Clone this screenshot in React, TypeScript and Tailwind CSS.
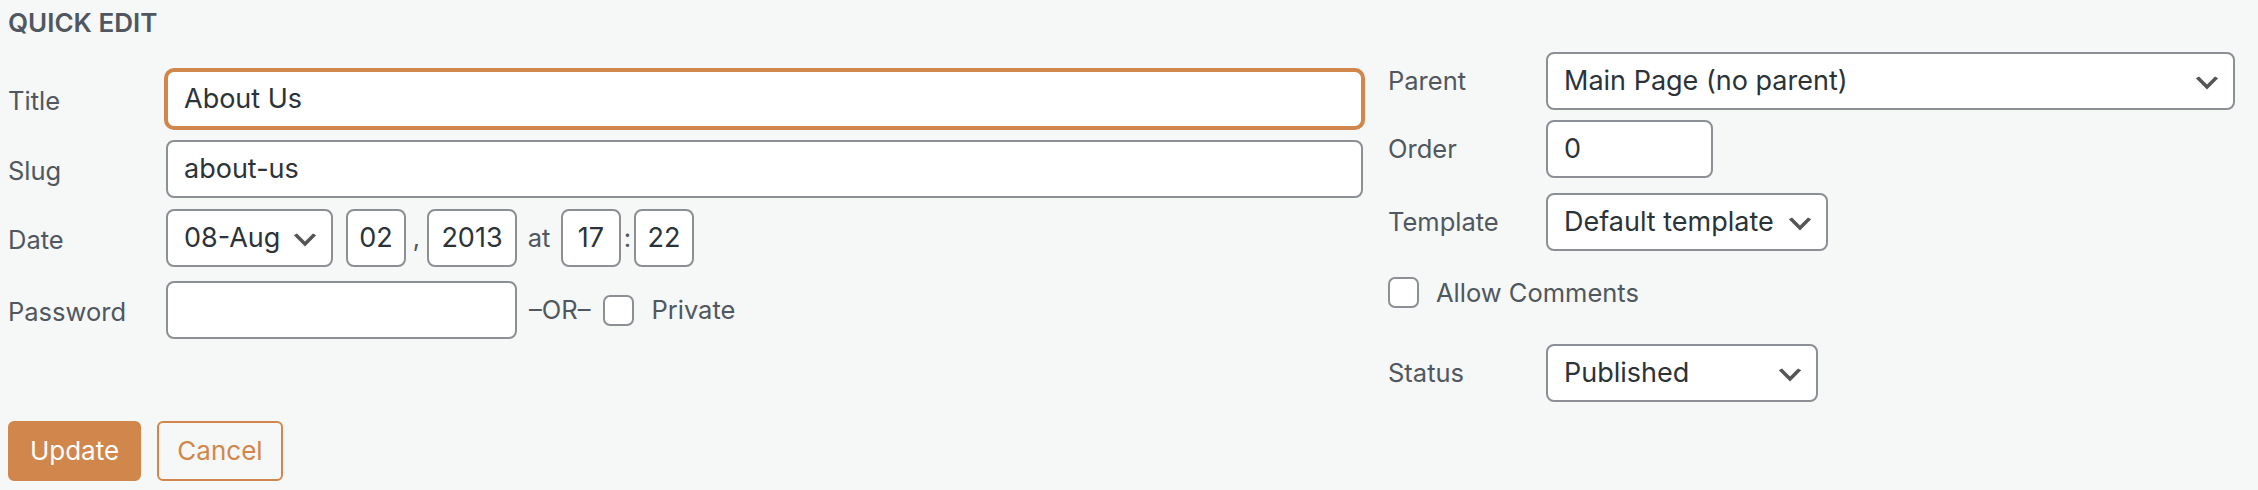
import React from "react";

function Chevron({ top }: { top: string }) {
  return (
    <svg
      width="32"
      height="32"
      viewBox="0 0 20 20"
      className={`absolute right-[10px] ${top}`}
    >
      <path d="M5 6l5 5 5-5 2 1-7 7-7-7 2-1z" fill="#555" />
    </svg>
  );
}

function Select({ value, w }: { value: string; w: string }) {
  return (
    <div
      className={`relative h-[58px] ${w} shrink-0 rounded-[8px] border-2 border-[#8c8f94] bg-white flex items-center pl-[16px] text-[27px] leading-[40px] text-[#2c3338]`}
    >
      <span className="whitespace-nowrap">{value}</span>
      <Chevron top="top-[13px]" />
    </div>
  );
}

function Box({ value, w, center }: { value: string; w: string; center?: boolean }) {
  return (
    <div
      className={`h-[58px] ${w} shrink-0 rounded-[8px] border-2 border-[#8c8f94] bg-white flex items-center ${
        center ? "justify-center" : "pl-[16px]"
      } text-[27px] leading-[40px] text-[#2c3338]`}
    >
      <span className="whitespace-nowrap">{value}</span>
    </div>
  );
}

function Checkbox() {
  return (
    <div className="w-[31px] h-[31px] shrink-0 rounded-[7px] border-2 border-[#8c8f94] bg-white" />
  );
}

function Label({ children, left }: { children: React.ReactNode; left?: boolean }) {
  return (
    <div
      className={`w-[158px] shrink-0 text-[25.5px] leading-[32px] text-[#50575e] ${
        left ? "pt-[3px]" : ""
      }`}
    >
      {children}
    </div>
  );
}

export default function App() {
  return (
    <div className="w-[2258px] h-[490px] bg-[#f6f7f7] font-['Inter',_'Liberation_Sans',_sans-serif] pl-[8px] overflow-hidden">
      <div className="pt-[10px] h-[36px] text-[26px] leading-[26px] font-semibold text-[#50575e]">
        QUICK EDIT
      </div>

      <div className="flex items-start">
        {/* Left column */}
        <div className="w-[1355px] shrink-0 pt-[34px] flex flex-col">
          <div className="flex items-center">
            <Label left>Title</Label>
            <div className="h-[58px] w-[1197px] rounded-[8px] border-2 border-[#d1874b] shadow-[0_0_0_2px_#d1874b] bg-white flex items-center pl-[16px] text-[27px] leading-[40px] text-[#2c3338]">
              About Us
            </div>
          </div>

          <div className="flex items-center mt-[12px]">
            <Label left>Slug</Label>
            <Box value="about-us" w="w-[1197px]" />
          </div>

          <div className="flex items-center mt-[11px]">
            <Label left>Date</Label>
            <Select value="08-Aug" w="w-[167px]" />
            <div className="ml-[13px]">
              <Box value="02" w="w-[60px]" center />
            </div>
            <span className="w-[21px] text-center text-[25.5px] leading-[32px] text-[#50575e]">,</span>
            <Box value="2013" w="w-[90px]" center />
            <span className="w-[44px] text-center text-[25.5px] leading-[32px] text-[#50575e]">at</span>
            <Box value="17" w="w-[60px]" center />
            <span className="w-[13px] text-center text-[25.5px] leading-[32px] text-[#50575e]">:</span>
            <Box value="22" w="w-[60px]" center />
          </div>

          <div className="flex items-center mt-[14px]">
            <Label left>Password</Label>
            <Box value="" w="w-[351px]" />
            <span className="ml-[12px] text-[25.5px] leading-[32px] text-[#50575e]">–OR–</span>
            <div className="ml-[13px]">
              <Checkbox />
            </div>
            <span className="ml-[17px] text-[25.5px] leading-[32px] text-[#50575e]">Private</span>
          </div>
        </div>

        {/* Right column */}
        <div className="ml-[25px] w-[847px] shrink-0 pt-[16px] flex flex-col">
          <div className="flex items-center">
            <Label>Parent</Label>
            <Select value="Main Page (no parent)" w="w-[689px]" />
          </div>
          <div className="flex items-center mt-[10px]">
            <Label>Order</Label>
            <Box value="0" w="w-[167px]" />
          </div>
          <div className="flex items-center mt-[15px]">
            <Label>Template</Label>
            <Select value="Default template" w="w-[282px]" />
          </div>
          <div className="flex items-center mt-[26px] h-[31px]">
            <Checkbox />
            <span className="ml-[17px] text-[25.5px] leading-[32px] text-[#50575e]">Allow Comments</span>
          </div>
          <div className="flex items-center mt-[36px]">
            <Label>Status</Label>
            <Select value="Published" w="w-[272px]" />
          </div>
        </div>
      </div>

      <div className="flex items-center mt-[19px] gap-[16px]">
        <div className="h-[60px] w-[133px] rounded-[6px] border-2 border-[#d1874b] bg-[#d1874b] flex items-center justify-center text-[26px] leading-[32px] text-white">
          Update
        </div>
        <div className="h-[60px] w-[126px] rounded-[6px] border-2 border-[#d1874b] bg-[#f6f7f7] flex items-center justify-center text-[26px] leading-[32px] text-[#d1874b]">
          Cancel
        </div>
      </div>
    </div>
  );
}
